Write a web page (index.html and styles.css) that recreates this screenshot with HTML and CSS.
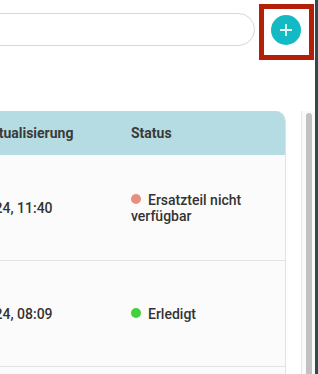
FILE: index.html
```html
<!DOCTYPE html>
<html lang="de">
<head>
  <meta charset="UTF-8">
  <meta name="viewport" content="width=device-width, initial-scale=1.0">
  <title>Aufträge</title>
  <link rel="stylesheet" href="styles.css">
</head>
<body>

  <div class="page">
    <div class="main">

      <!-- Suche und Neu-Button -->
      <div class="toolbar">
        <input type="text" class="search" aria-label="Suche">
        <div class="add-wrap">
          <button class="add" aria-label="Neu">
            <svg width="14" height="14" viewBox="0 0 14 14">
              <path d="M7 1v12M1 7h12" stroke="#fff" stroke-width="1.8" stroke-opacity="0.9" fill="none"/>
            </svg>
          </button>
          <span class="highlight"></span>
        </div>
      </div>

      <!-- Liste -->
      <div class="list">
        <div class="scroller">
          <div class="table">
            <div class="row head">
              <div class="cell">Letzte Aktualisierung</div>
              <div class="cell">Status</div>
            </div>
            <div class="row">
              <div class="cell">12.03.2024, 11:40</div>
              <div class="cell"><span class="dot red"></span>Ersatzteil nicht verfügbar</div>
            </div>
            <div class="row">
              <div class="cell">11.03.2024, 08:09</div>
              <div class="cell"><span class="dot green"></span>Erledigt</div>
            </div>
            <div class="row">
              <div class="cell">08.03.2024, 14:22</div>
              <div class="cell"><span class="dot green"></span>Erledigt</div>
            </div>
          </div>
        </div>
        <div class="scrollbar"><div class="thumb"></div></div>
      </div>

    </div>
    <div class="edge"></div>
  </div>

</body>
</html>
```

FILE: styles.css
```css
body {
  margin: 0;
  padding: 0;
  font-family: Roboto, "Liberation Sans", sans-serif;
  background-color: #fff;
  overflow: hidden;
}

.page {
  display: flex;
  height: 374px;
}

.main {
  flex: 1;
  min-width: 0;
  display: flex;
  flex-direction: column;
}

.edge {
  width: 3px;
  background-color: #2f4b4d;
}

.toolbar {
  display: flex;
  align-items: center;
  gap: 16px;
  margin-left: -40px;
  padding: 13px 14px 0 0;
}

.search {
  flex: 1;
  height: 33px;
  box-sizing: border-box;
  border: 1px solid #d6d6d6;
  border-radius: 17px;
  padding: 0 16px;
  font-family: inherit;
  font-size: 14px;
}

.add-wrap {
  position: relative;
}

.add {
  display: flex;
  align-items: center;
  justify-content: center;
  width: 30px;
  height: 30px;
  padding: 0;
  border: none;
  border-radius: 50%;
  background-color: #13bac4;
  cursor: pointer;
}

.highlight {
  position: absolute;
  top: -11px;
  right: -13px;
  bottom: -15px;
  left: -12px;
  border: 5px solid #b41f0a;
}

.list {
  flex: 1;
  min-height: 0;
  display: flex;
  margin-top: 65px;
}

.scroller {
  flex: 1;
  margin-left: -77px;
  padding-right: 15px;
  overflow: hidden;
}

.scrollbar {
  width: 14px;
  box-sizing: border-box;
  border-left: 1px solid #e6e6e6;
  background-color: #fafafa;
  padding: 2px 3px 0 4px;
  display: flex;
}

.thumb {
  flex: 1;
  background-color: #c1c1c1;
  border-radius: 4px 4px 0 0;
}

.table {
  border-right: 1px solid #e2e2e2;
  border-radius: 10px 10px 0 0;
  overflow: hidden;
}

.row {
  display: grid;
  grid-template-columns: 192px 1fr;
  align-items: center;
  height: 106px;
  box-sizing: border-box;
  border-bottom: 1px solid #e2e2e2;
  background-color: #fbfbfb;
  color: #333;
  font-size: 14px;
  font-weight: 500;
  line-height: 16px;
}

.row.head {
  height: 44px;
  border-bottom: none;
  background-color: #b5dce2;
  color: #3a3a3a;
  font-weight: bold;
}

.cell {
  padding: 0 16px;
}

.dot {
  display: inline-block;
  width: 10px;
  height: 10px;
  margin-right: 7px;
  border-radius: 50%;
  vertical-align: 1px;
}

.dot.red {
  background-color: #e98f7e;
}

.dot.green {
  background-color: #41d13b;
}
```
